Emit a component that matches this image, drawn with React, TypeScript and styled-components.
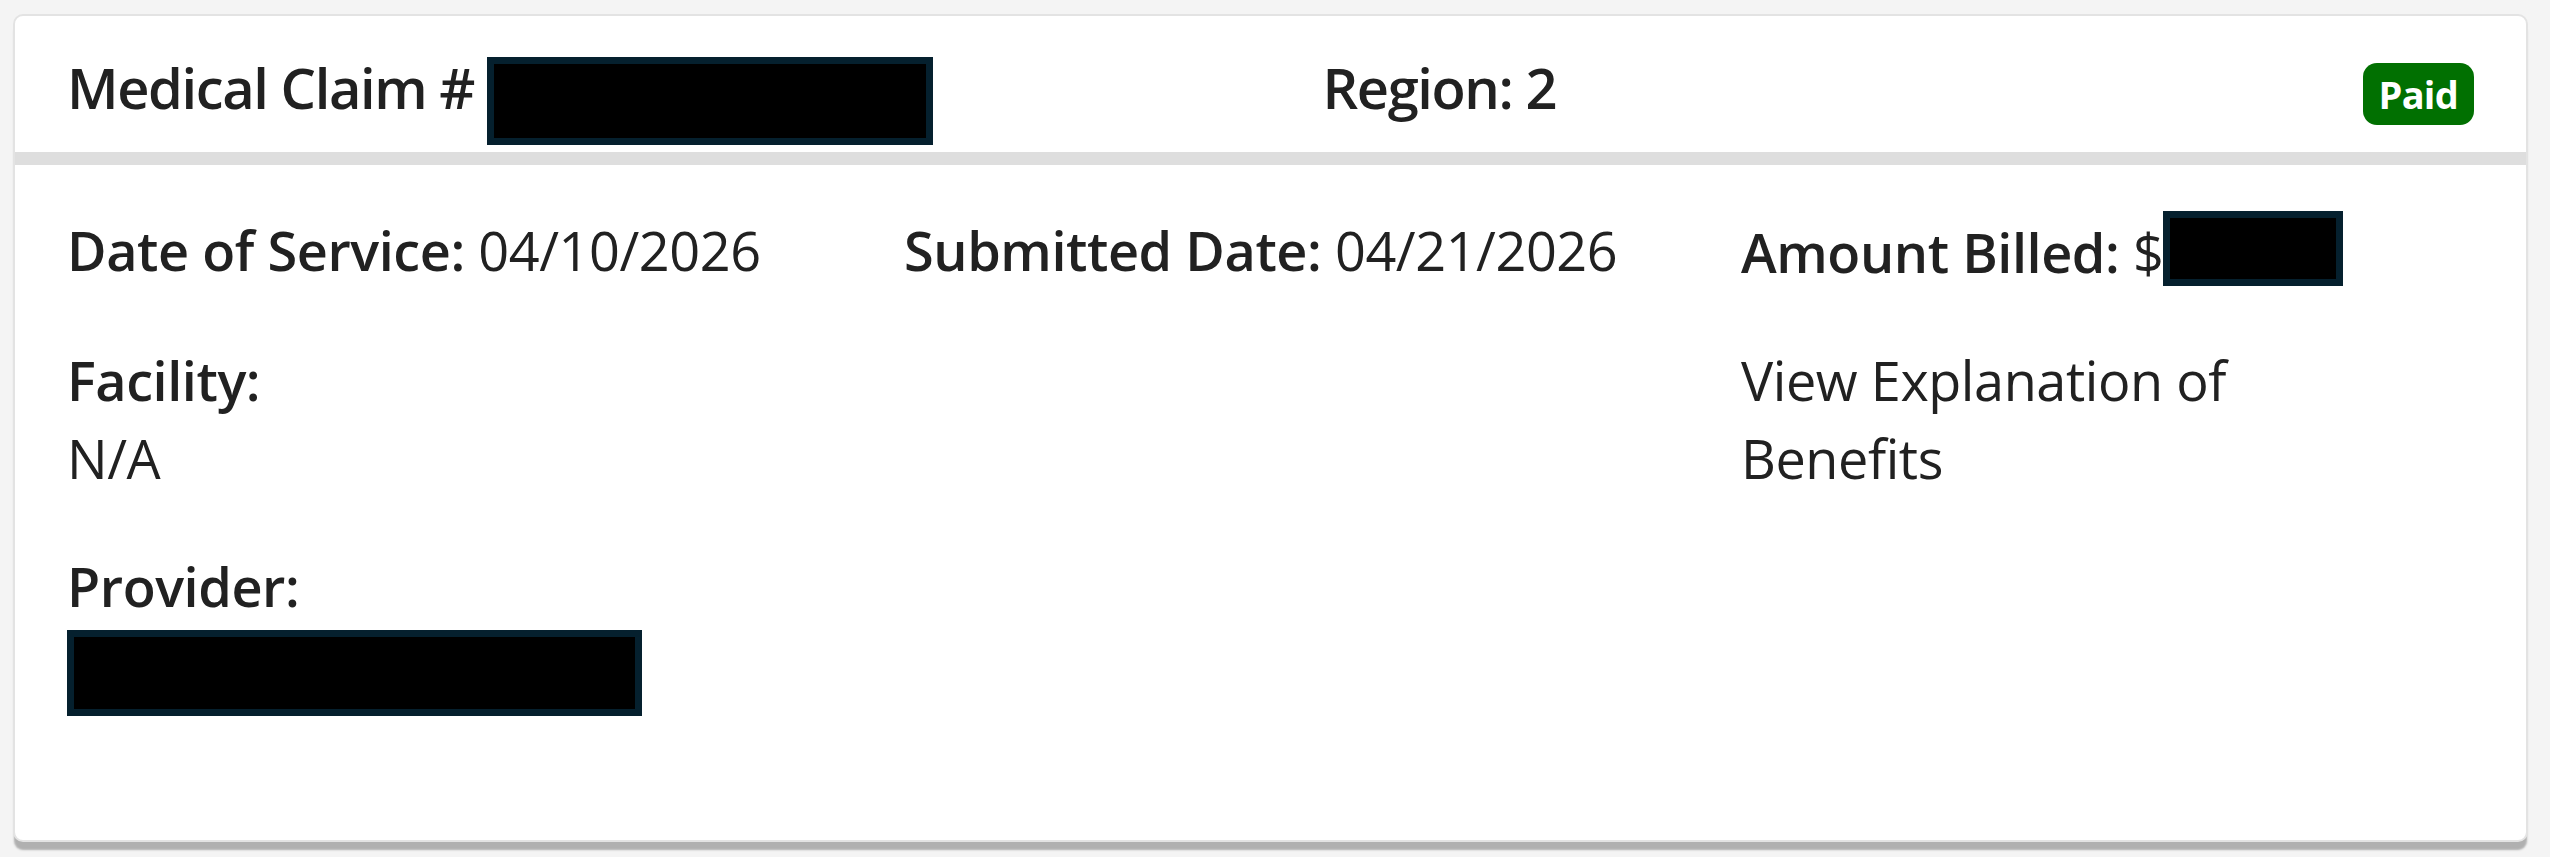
import React from 'react'
import styled, { createGlobalStyle } from 'styled-components'

const GlobalStyle = createGlobalStyle`
  html, body {
    margin: 0;
    padding: 0;
    background: #f4f4f4;
  }
  body {
    font-family: 'Open Sans', 'Noto Sans', Arial, sans-serif;
    color: #212121;
  }
`

interface RedactedProps {
  $w: number
  $h: number
  $drop?: number
  $block?: boolean
}

const Page = styled.div`
  padding: 14px 22px 0 13px;
  min-height: 857px;
  box-sizing: border-box;
`

const Card = styled.div`
  background: #fff;
  border: 2px solid #e3e3e3;
  border-radius: 10px;
  box-shadow: 0 9px 2px -1px #b0b0b0;
`

const Header = styled.div`
  display: grid;
  grid-template-columns: 1fr 1fr;
  height: 149px;
  box-sizing: border-box;
  padding-top: 32px;
  border-bottom: 13px solid #dedede;
`

const HeaderCol = styled.div`
  padding: 0 52px;
  display: flex;
  align-items: baseline;
  justify-content: space-between;
`

const Title = styled.div`
  font-size: 56px;
  line-height: 78px;
  font-weight: 600;
  letter-spacing: -0.025em;
  white-space: nowrap;
`

const StatusBadge = styled.span`
  display: inline-block;
  background: #017001;
  color: #fff;
  font-size: 38px;
  font-weight: 700;
  letter-spacing: -0.02em;
  line-height: 62px;
  padding: 0 16px;
  border-radius: 14px;
`

const Body = styled.div`
  display: grid;
  grid-template-columns: repeat(3, 1fr);
  row-gap: 50px;
  padding: 46px 0 124px;
  font-size: 54px;
  line-height: 78px;
  letter-spacing: -0.008em;
`

const Field = styled.div`
  padding: 0 52px;
  white-space: nowrap;
`

const StackField = styled.div`
  padding: 0 52px;
`

const Label = styled.span<{ $block?: boolean }>`
  font-weight: 600;
  display: ${(p) => (p.$block ? 'block' : 'inline')};
`

const Value = styled.div``

const EobLink = styled.a`
  color: #212121;
  text-decoration: none;
  display: block;
  max-width: 560px;
  cursor: pointer;
`

const Redacted = styled.span<RedactedProps>`
  display: ${(p) => (p.$block ? 'block' : 'inline-block')};
  width: ${(p) => p.$w}px;
  height: ${(p) => p.$h}px;
  box-sizing: border-box;
  background: #000;
  border: 7px solid #05202e;
  vertical-align: ${(p) => -(p.$drop || 0)}px;
  margin-top: ${(p) => (p.$block ? 5 : 0)}px;
`

const Empty = styled.div``

export default function App() {
  return (
    <>
      <GlobalStyle />
      <Page>
        <Card>
          <Header>
            <HeaderCol>
              <Title>
                Medical Claim # <Redacted $w={446} $h={88} $drop={36} />
              </Title>
            </HeaderCol>
            <HeaderCol>
              <Title>Region: 2</Title>
              <StatusBadge>Paid</StatusBadge>
            </HeaderCol>
          </Header>
          <Body>
            <Field>
              <Label>Date of Service:</Label> 04/10/2026
            </Field>
            <Field>
              <Label>Submitted Date:</Label> 04/21/2026
            </Field>
            <Field>
              <Label>Amount Billed:</Label> $<Redacted $w={180} $h={75} $drop={13} />
            </Field>

            <StackField>
              <Label $block>Facility:</Label>
              <Value>N/A</Value>
            </StackField>
            <Empty />
            <StackField>
              <EobLink>View Explanation of Benefits</EobLink>
            </StackField>

            <StackField>
              <Label $block>Provider:</Label>
              <Redacted $w={575} $h={86} $block />
            </StackField>
          </Body>
        </Card>
      </Page>
    </>
  )
}
